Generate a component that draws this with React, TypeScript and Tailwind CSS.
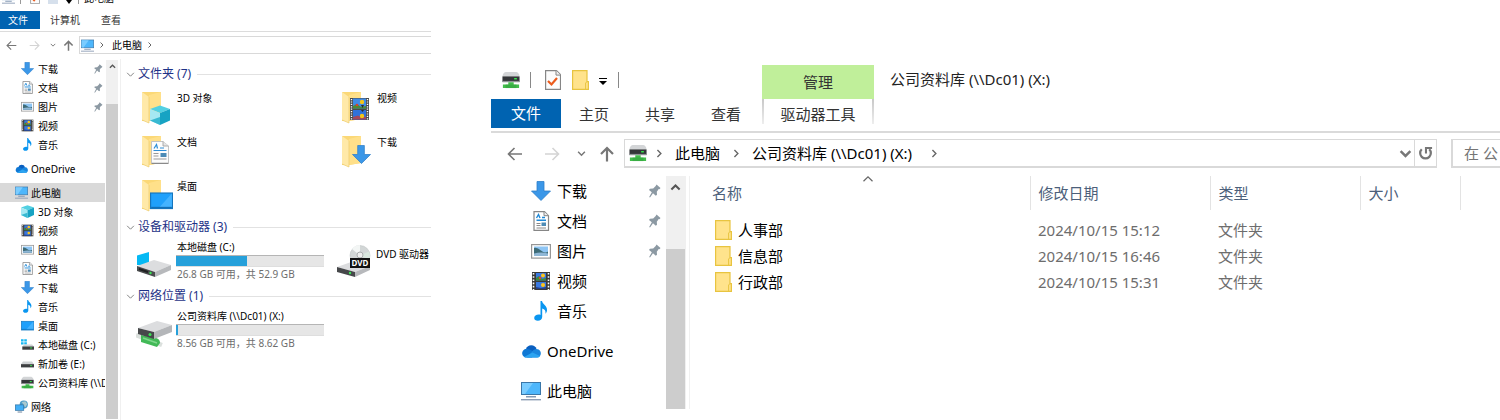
import React from 'react';

type IconProps = { className?: string };
type Icon = (p: IconProps) => React.ReactElement;

const Monitor: Icon = ({ className }) => (
  <svg viewBox="0 0 20 20" className={className} aria-hidden="true">
    <rect x="0.5" y="1.5" width="19" height="12" fill="#4db6fb" stroke="#3a76a8" />
    <path d="M1 2h11L4 13H1z" fill="#7accff" />
    <rect x="5" y="15" width="10" height="1.5" fill="#8399b3" />
    <rect x="0" y="18" width="20" height="1.4" fill="#8d9db5" />
  </svg>
);

const DownArrow: Icon = ({ className }) => (
  <svg viewBox="0 0 20 20" className={className} aria-hidden="true">
    <path d="M6 .5h7v9.500h6.500L10 19.500.5 10H6z" fill="#3b97e8" stroke="#2f7fc9" strokeWidth="0.8" />
  </svg>
);

const Doc: Icon = ({ className }) => (
  <svg viewBox="0 0 20 20" className={className} aria-hidden="true">
    <path d="M3 .7h10.500l4 4v14.600H3z" fill="#fff" stroke="#868686" strokeWidth="1.2" />
    <path d="M13 .7v4h4.500" fill="#eee" stroke="#868686" />
    <path d="M5.500 7l2-3.500 1.500 3.500M11 6.500h3M5.500 9.200h9.500" stroke="#1e88d6" strokeWidth="1.4" fill="none" />
    <path d="M5.500 12.500h4M5.500 14.500h4M5.500 17h9.500" stroke="#8a8a8a" />
    <rect x="10.500" y="11.500" width="4.500" height="3.500" fill="#4d8bb5" />
  </svg>
);

const BigDoc: Icon = ({ className }) => (
  <svg viewBox="0 0 18 23" className={className} aria-hidden="true">
    <path d="M.5.5H12L17.500 5v17H.5z" fill="#fcfcfc" stroke="#c3c3c3" />
    <path d="M12 .5V5h5.500" fill="#e6e6e6" stroke="#9a9a9a" strokeWidth="0.800" />
    <path d="M.5 22.500h17" stroke="#8a8a8a" />
    <path d="M3 7.500l2.500-4 1 4M9 7h4M2.500 9.500h13" stroke="#2c8ed8" strokeWidth="1.200" fill="none" />
    <path d="M2.500 12.500h5M2.500 15h5M2.500 18h13" stroke="#9a9a9a" />
    <rect x="9.500" y="12" width="6" height="4" fill="#4d8bb5" />
  </svg>
);

const Picture: Icon = ({ className }) => (
  <svg viewBox="0 0 20 20" className={className} aria-hidden="true">
    <rect x="0.6" y="3.600" width="18.800" height="13.500" fill="#fff" stroke="#969696" strokeWidth="1.2" />
    <rect x="3" y="5.500" width="14" height="9.500" fill="#8ec5f4" />
    <path d="M3 7q3-1 7 2.500t7 1V15H3z" fill="#3e6c78" />
    <path d="M3 12.500q7-2 14 0V15H3z" fill="#8fb7d6" />
  </svg>
);

const Film: Icon = ({ className }) => (
  <svg viewBox="0 0 20 20" className={className} aria-hidden="true">
    <rect x="1" y="1" width="18" height="18" fill="#3a3a3a" />
    <path d="M2.500 2v17M17.500 2v17" stroke="#fff" strokeWidth="1.600" strokeDasharray="1.600 1.600" />
    <rect x="5" y="2" width="10" height="7.500" fill="#3a78e0" />
    <rect x="5" y="11" width="10" height="7" fill="#3a78e0" />
    <path d="M5 9.500V7l3-2 3 3 4-1v2.500z" fill="#3f8a3a" />
    <circle cx="12" cy="4.500" r="2" fill="#ffc61a" />
    <circle cx="9" cy="7" r="1.200" fill="#e0472f" />
    <circle cx="12" cy="14" r="2" fill="#ffc61a" />
    <path d="M5 18v-2l5 1 5-1v2z" fill="#25408a" />
  </svg>
);

const BigFilm: Icon = ({ className }) => (
  <svg viewBox="0 0 19 22" className={className} aria-hidden="true">
    <rect width="19" height="22" fill="#4a4a4a" />
    <path d="M1.500 1v21M17.500 1v21" stroke="#fff" strokeWidth="1.400" strokeDasharray="1.200 1.200" />
    <rect x="3" y="0.5" width="13" height="10" fill="#3f8ae6" />
    <path d="M3 10.500V8l4-2 4 3 5-1v2.500z" fill="#4d8a34" />
    <circle cx="12" cy="4" r="2.200" fill="#f5c518" />
    <path d="M11 7h3l-1.500 3z" fill="#2c2c2c" />
    <circle cx="7" cy="7" r="1.300" fill="#d8402c" />
    <rect x="3" y="12" width="13" height="9.500" fill="#2f72da" />
    <path d="M3 21.500V19l5-1.500 4 2 4-1v3z" fill="#a3485c" />
    <circle cx="12" cy="18" r="2.200" fill="#f5c518" />
    <path d="M11 12h3l-1.500 2z" fill="#2c2c2c" />
  </svg>
);

const Note: Icon = ({ className }) => (
  <svg viewBox="0 0 20 20" className={className} aria-hidden="true">
    <path d="M9.500 0H11c.6 3.500 5.500 4.500 5 9.500-.2 1.800-1 2.700-1.600 3.300.6-3-.6-4.600-3.200-5.400V16c0 2.400-2 3.800-4.400 3.800-2.200 0-3.600-1-3.600-2.700 0-2 2-3.500 4.500-3.500.7 0 1.300.1 1.800.3z" fill="#0a96f0" />
  </svg>
);

const Cloud: Icon = ({ className }) => (
  <svg viewBox="0 0 20 20" className={className} aria-hidden="true">
    <path d="M5 8a5.600 5.600 0 0 1 10.500 0l-3 4-7-1z" fill="#0a5fc0" />
    <path d="M4.500 16.500A4.200 4.200 0 1 1 6.500 8c2.500.3 5 2 7.500 4l-3 4.500z" fill="#0f78d4" />
    <path d="M11 10.500c2-3 6.500-3.500 8.300-.2 1.500 3-.3 6.200-3.300 6.200H6z" fill="#1a86de" />
    <path d="M3 16l8.500-4.500L19 15c-.7 1-1.800 1.500-3 1.500H4.500c-.6 0-1-.2-1.500-.5z" fill="#2ba4f1" />
  </svg>
);

const Cube: Icon = ({ className }) => (
  <svg viewBox="0 0 20 20" className={className} aria-hidden="true">
    <path d="M0 4l10-3.500L20 4l-10 4z" fill="#52d0e2" />
    <path d="M0 4l10 4v12L0 15.500z" fill="#a5e8f2" />
    <path d="M20 4L10 8v12l10-4.500z" fill="#17a3c3" />
    <path d="M0 15.500L10 12v8z" fill="#38b9d2" />
  </svg>
);

const Desktop: Icon = ({ className }) => (
  <svg viewBox="0 0 20 20" className={className} aria-hidden="true">
    <rect x="0.5" y="3.500" width="19" height="13.500" fill="#1fa0fb" stroke="#1575bd" />
    <path d="M19 4v12H8z" fill="#44b3ff" />
    <path d="M1 16h18" stroke="#1170b8" />
  </svg>
);

const Drive: Icon = ({ className }) => (
  <svg viewBox="0 0 20 20" className={className} aria-hidden="true">
    <path d="M3 7h14l3 4H0z" fill="#cfd2d4" />
    <rect x="0" y="11" width="20" height="5" fill="#3d3f41" />
    <rect x="14" y="12.500" width="3" height="1.500" fill="#38e04e" />
  </svg>
);

const WinDrive: Icon = ({ className }) => (
  <svg viewBox="0 0 20 20" className={className} aria-hidden="true">
    <path d="M0 2h4v3.500H0zM5 2h4v3.500H5zM0 6.500h4V10H0zM5 6.500h4V10H5z" fill="#18b7f2" />
    <path d="M5 10h12l3 3H2z" fill="#cfd2d4" />
    <rect x="2" y="13" width="18" height="5" fill="#3d3f41" />
    <rect x="14" y="14.500" width="3" height="1.500" fill="#38e04e" />
  </svg>
);

const NetDrive: Icon = ({ className }) => (
  <svg viewBox="0 0 20 20" className={className} aria-hidden="true">
    <path d="M4 1h12q3 1 3.500 5H.5Q1 2 4 1z" fill="#d3d5d7" />
    <rect x="0.500" y="6" width="19" height="6" fill="#343639" />
    <path d="M.5 11h19v1.500H.5z" fill="#909497" />
    <rect x="13.500" y="7.800" width="3" height="1.600" fill="#35e84d" />
    <path d="M7 12.500h6V15h6v4H1v-4h6z" fill="#43bd4c" />
    <path d="M4 15h12v4H4z" fill="#2e9e39" opacity=".5" />
  </svg>
);

const Network: Icon = ({ className }) => (
  <svg viewBox="0 0 20 20" className={className} aria-hidden="true">
    <circle cx="13.500" cy="7" r="6.300" fill="#4b9bc9" />
    <path d="M10 3q3 2 2 5l4 3 3-5-3-4z" fill="#a8c8cf" />
    <rect x="0.5" y="7.500" width="13" height="8.500" fill="#42aef6" stroke="#2d6e9f" />
    <path d="M4 18.500h7" stroke="#6d8299" strokeWidth="1.500" />
  </svg>
);

const Pin: Icon = ({ className }) => (
  <svg viewBox="0 0 12 14" className={className} aria-hidden="true">
    <path d="M7.500.5l4 3.500-1 1.300-.8-.2-1.900 2.600.2 3-1.200 1L4 9.200 1 13.500l-.8-.4 2.600-4.900L0 6l.9-1.200 3.300-.3L6.700 2z" fill="#8c99a3" />
  </svg>
);

const Check: Icon = ({ className }) => (
  <svg viewBox="0 0 16 20" className={className} aria-hidden="true">
    <path d="M.6.6h10.900l4 4v14.800H.6z" fill="#fcfcfc" stroke="#868686" strokeWidth="1.200" />
    <path d="M11 .6v4.500h4.500" fill="#eee" stroke="#868686" />
    <path d="M3 11l3.500 3.500L12 8" fill="none" stroke="#eb5b1c" strokeWidth="2.200" />
  </svg>
);

const SmallFolder: Icon = ({ className }) => (
  <svg viewBox="0 0 17 20" className={className} aria-hidden="true">
    <path d="M.6.600h14.400v11h1.400v7.800H.6z" fill="#ffe38c" stroke="#e8c440" strokeWidth="1.200" />
    <path d="M13.600 19v-6l1.400-1.400" fill="none" stroke="#e8c440" />
  </svg>
);

const Folder: Icon = ({ className }) => (
  <svg viewBox="0 0 30 34" className={className} aria-hidden="true">
    <path d="M1 1h19v27l-12 2H1z" fill="#fbd877" />
    <path d="M8 4l12-3v27L8 30z" fill="#ffe08a" />
    <path d="M1 1l7 5v26l-7-3z" fill="#ffe9a8" />
    <path d="M1 29l7 3V6" fill="none" stroke="#eccb6c" strokeWidth="0.700" />
  </svg>
);

const BigC: Icon = ({ className }) => (
  <svg viewBox="0 0 36 32" className={className} aria-hidden="true">
    <path d="M1 7.500L13 4v13H1z" fill="#05b9f4" />
    <path d="M1 18l17-6 17 5-16 7z" fill="#dcdddf" />
    <path d="M19 24l16-7v5l-16 7z" fill="#b7b9bc" />
    <path d="M1 18l18 6v5L1 23z" fill="#4a4c4e" />
    <path d="M3 21l9 3" stroke="#1f2021" strokeWidth="2" />
    <circle cx="14.500" cy="25" r="1.200" fill="#3ce556" />
  </svg>
);

const BigNet: Icon = ({ className }) => (
  <svg viewBox="0 0 36 32" className={className} aria-hidden="true">
    <path d="M0 18l26 10" stroke="#dbe0dd" strokeWidth="4.500" />
    <path d="M5 18l15 3q4 1 4 5l-3 4L5 25z" fill="#42b957" />
    <path d="M7 21l14 5" stroke="#7fd88c" strokeWidth="1.500" />
    <path d="M2 11l19-7 15 4-18 7z" fill="#dcdddf" />
    <path d="M18 15l18-7v7l-18 7z" fill="#b4b6b9" />
    <path d="M2 11l16 4v7L2 17z" fill="#46484a" />
    <circle cx="14" cy="17.500" r="1.500" fill="#3ce556" />
  </svg>
);

const BigDvd: Icon = ({ className }) => (
  <svg viewBox="0 0 36 34" className={className} aria-hidden="true">
    <path d="M1 23l17-6 16 5-15 6z" fill="#dcdddf" />
    <path d="M19 28l15-6v4l-15 7z" fill="#b7b9bc" />
    <path d="M1 23l18 5v5L1 28z" fill="#46484a" />
    <circle cx="24" cy="11.500" r="10" fill="#d2d6d6" stroke="#b7bcbc" strokeWidth="0.500" />
    <path d="M24 11.500L16 5q3-4 8-4z" fill="#f3f6f5" />
    <path d="M24 11.500l9-4q2 4 0 8z" fill="#d8e6dd" />
    <circle cx="24" cy="11" r="3" fill="#eee" stroke="#a9adad" />
    <rect x="14" y="14" width="20" height="10" fill="#111" />
    <text x="24" y="22" textAnchor="middle" fontSize="8" fontWeight="bold" fontFamily="Noto Sans" fill="#fff">DVD</text>
    <circle cx="14" cy="29" r="1.200" fill="#3ce556" />
  </svg>
);

const Refresh: Icon = ({ className }) => (
  <svg viewBox="0 0 16 16" className={className} aria-hidden="true">
    <path d="M4 3.500A5.700 5.700 0 1 0 12 3.500" fill="none" stroke="currentColor" strokeWidth="2.400" />
    <path d="M8.500 8V2.200H15" fill="none" stroke="currentColor" strokeWidth="2.200" />
  </svg>
);

const Stroke = ({ d, className, width = 1.600 }: { d: string; className: string; width?: number }) => (
  <svg viewBox="0 0 16 16" className={className} fill="none" stroke="currentColor" strokeWidth={width} aria-hidden="true">
    <path d={d} />
  </svg>
);
const LEFT = 'M15 8H1.500M7.500 2L1.500 8l6 6';
const RIGHT = 'M1 8h13.500M8.500 2l6 6-6 6';
const UP = 'M8 15.500V2M2 8l6-6 6 6';
const CHEV_R = 'M5 3l5 5-5 5';
const CHEV_D = 'M2 5l6 6 6-6';
const CHEV_U = 'M2 11l6-6 6 6';

const SHARE = '公司资料库 (\\\\Dc01) (X:)';

type Item = { icon: Icon; label: string; pin?: boolean };
const quick: Item[] = [
  { icon: DownArrow, label: '下载', pin: true },
  { icon: Doc, label: '文档', pin: true },
  { icon: Picture, label: '图片', pin: true },
  { icon: Film, label: '视频' },
  { icon: Note, label: '音乐' },
];
const computer: Item[] = [
  { icon: Cube, label: '3D 对象' },
  { icon: Film, label: '视频' },
  { icon: Picture, label: '图片' },
  { icon: Doc, label: '文档' },
  { icon: DownArrow, label: '下载' },
  { icon: Note, label: '音乐' },
  { icon: Desktop, label: '桌面' },
  { icon: WinDrive, label: '本地磁盘 (C:)' },
  { icon: Drive, label: '新加卷 (E:)' },
  { icon: NetDrive, label: SHARE },
];

function SmallRow({ item, top, active }: { item: Item; top?: boolean; active?: boolean }) {
  const I = item.icon;
  return (
    <a href="#" className={`flex h-[19px] items-center overflow-hidden ${top ? 'gap-[3px] pl-[15px]' : 'gap-1 pl-[21px]'} ${active ? 'bg-[#d9d9d9]' : ''}`}>
      <I className="size-[13px] shrink-0" />
      <span className="grow whitespace-nowrap">{item.label}</span>
      {item.pin && <Pin className="mr-[2px] h-[10px] w-[9px] shrink-0" />}
    </a>
  );
}

function LargeRow({ item, top }: { item: Item; top?: boolean }) {
  const I = item.icon;
  return (
    <a href="#" className={`flex h-[30px] items-center gap-1.5 pr-[5px] ${top ? 'pl-[30px]' : 'pl-[40px]'}`}>
      <I className="size-5 shrink-0" />
      <span className="grow whitespace-nowrap">{item.label}</span>
      {item.pin && <Pin className="h-[14px] w-3 shrink-0" />}
    </a>
  );
}

function Section({ title, children }: { title: string; children: React.ReactNode }) {
  return (
    <section>
      <h2 className="flex h-[18px] items-center gap-[3px] pl-[5px] text-xs text-[#1e3287]">
        <Stroke d={CHEV_D} className="size-[9px] text-[#777]" />
        <span className="whitespace-nowrap">{title}</span>
        <span className="ml-[3px] h-px grow bg-[#e2e2e2]" />
      </h2>
      {children}
    </section>
  );
}

function FolderTile({ icon: I, label, place }: { icon: Icon; label: string; place: string }) {
  return (
    <a href="#" className="flex h-[44px] items-start gap-[5px]">
      <span className="relative w-[31px]">
        <Folder className="h-[34px] w-[30px]" />
        <I className={`absolute ${place}`} />
      </span>
      <span className="whitespace-nowrap leading-[14px]">{label}</span>
    </a>
  );
}

function DriveTile({ icon: I, label, percent, detail }: { icon: Icon; label: string; percent: number; detail: string }) {
  return (
    <a href="#" className="flex items-start gap-1">
      <I className="mt-2 h-8 w-9 shrink-0" />
      <span className="flex w-[148px] flex-col">
        <span className="whitespace-nowrap pl-px leading-[14px]">{label}</span>
        <span role="meter" aria-label={label} aria-valuenow={percent} className="mt-px flex h-3 border-y border-b-[#dedede] border-t-[#b5b5b5] bg-[#e6e6e6]">
          <span className="min-w-[2px] bg-[#26a0da]" style={{ width: `${percent}%` }} />
        </span>
        <span className="whitespace-nowrap pl-px leading-[14px] text-[#6d6d6d]">{detail}</span>
      </span>
    </a>
  );
}

function ComputerWindow() {
  return (
    <section className="flex min-w-0 flex-col text-[10px] leading-3">
      <header className="flex h-[11px] items-end overflow-hidden pb-[7px] pl-0.5">
        <Monitor className="size-[13px] shrink-0" />
        <span className="ml-[5px] h-3 w-px bg-[#999]" />
        <Check className="ml-[9px] h-3 w-[10px] shrink-0" />
        <span className="ml-2 h-3 w-[10px] bg-[#d6e0ec]" />
        <span className="ml-2 size-0 border-x-[3px] border-t-[4px] border-x-transparent border-t-black" />
        <span className="ml-[6px] h-3 w-px bg-[#999]" />
        <h1 className="ml-[5px] whitespace-nowrap">此电脑</h1>
      </header>
      <nav className="flex h-[18px] items-stretch text-[#333]">
        <button className="w-10 bg-[#0063b1] pr-1 text-white">文件</button>
        <button className="ml-[10px]">计算机</button>
        <button className="ml-[21px]">查看</button>
      </nav>
      <div className="mt-[2px] h-px bg-[#dcdcdc]" />
      <div className="mt-1 flex h-[18px] items-center">
        <div className="flex w-[79px] shrink-0 items-center pl-1.5 text-[#777]">
          <button aria-label="后退"><Stroke d={LEFT} className="size-[11px]" /></button>
          <button aria-label="前进" className="ml-3 text-[#d4d4d4]"><Stroke d={RIGHT} className="size-[11px]" /></button>
          <button aria-label="历史" className="ml-[10px]"><Stroke d={CHEV_D} className="size-[6px]" width={2.500} /></button>
          <button aria-label="向上" className="ml-[7px]"><Stroke d={UP} className="size-[11px]" width={2.200} /></button>
        </div>
        <div className="flex h-[18px] grow items-center border border-r-0 border-[#d9d9d9] pl-px">
          <Monitor className="size-[13px]" />
          <Stroke d={CHEV_R} className="ml-1 size-[8px] text-[#666]" width={2} />
          <span className="ml-[6px]">此电脑</span>
          <Stroke d={CHEV_R} className="ml-1 size-[8px] text-[#666]" width={2} />
        </div>
      </div>
      <div className="flex grow pt-[5px]">
        <nav className="w-[105px] shrink-0 overflow-hidden">
          {quick.map((q) => <SmallRow key={q.label} item={q} />)}
          <div className="py-[5px]"><SmallRow item={{ icon: Cloud, label: 'OneDrive' }} top /></div>
          <SmallRow item={{ icon: Monitor, label: '此电脑' }} top active />
          {computer.map((q) => <SmallRow key={q.label} item={q} />)}
          <div className="pt-[5px]"><SmallRow item={{ icon: Network, label: '网络' }} top /></div>
        </nav>
        <div className="mb-px ml-px mt-px flex w-3 shrink-0 flex-col items-center bg-[#f0f0f0]">
          <Stroke d={CHEV_U} className="mb-[34px] mt-[3px] size-[7px] shrink-0 text-[#555]" width={3} />
          <div className="w-full grow bg-[#cdcdcd]" />
        </div>
        <main className="ml-[2px] min-w-0 grow overflow-hidden border-l border-[#f0f0f0] pt-[6px]">
          <Section title="文件夹 (7)">
            <div className="grid grid-cols-[200px_1fr] pl-5 pt-[8px]">
              <FolderTile icon={Cube} label="3D 对象" place="left-[9px] top-[14px] size-[20px]" />
              <FolderTile icon={BigFilm} label="视频" place="left-[9px] top-[7px] h-[22px] w-[19px]" />
              <FolderTile icon={BigDoc} label="文档" place="left-[10px] top-[6px] h-[23px] w-[18px]" />
              <FolderTile icon={DownArrow} label="下载" place="left-[11px] top-[10px] size-[19px]" />
              <FolderTile icon={Desktop} label="桌面" place="left-[9px] top-[10px] size-[23px]" />
            </div>
          </Section>
          <div className="-mt-[5px]">
            <Section title="设备和驱动器 (3)">
              <div className="grid grid-cols-[200px_1fr] pl-[15px] pt-1">
                <DriveTile icon={BigC} label="本地磁盘 (C:)" percent={48} detail="26.8 GB 可用，共 52.9 GB" />
                <a href="#" className="flex items-start gap-1">
                  <BigDvd className="mt-1 h-[34px] w-9 shrink-0" />
                  <span className="whitespace-nowrap pt-[7px] leading-[14px]">DVD 驱动器</span>
                </a>
              </div>
            </Section>
          </div>
          <div className="pt-1.5">
            <Section title="网络位置 (1)">
              <div className="pl-[15px] pt-1">
                <DriveTile icon={BigNet} label={SHARE} percent={1} detail="8.56 GB 可用，共 8.62 GB" />
              </div>
            </Section>
          </div>
        </main>
      </div>
    </section>
  );
}

const rows = [
  ['人事部', '2024/10/15 15:12'],
  ['信息部', '2024/10/15 16:46'],
  ['行政部', '2024/10/15 15:31'],
];

function ShareWindow() {
  return (
    <section className="flex min-w-0 flex-col pt-[65px] text-[15px] leading-5">
      <header className="flex">
        <div className="w-[271px] shrink-0">
          <div className="flex h-[34px] items-center pb-1 pl-[11px]">
            <NetDrive className="size-[18px]" />
            <span className="ml-[10px] h-4 w-px bg-[#888]" />
            <Check className="ml-[14px] h-5 w-4" />
            <SmallFolder className="ml-[11px] h-5 w-[17px]" />
            <button aria-label="自定义快速访问工具栏" className="ml-[10px] flex flex-col items-center gap-[2px] pt-[2px]">
              <span className="h-px w-2 bg-black" />
              <span className="size-0 border-x-[4px] border-t-[4px] border-x-transparent border-t-black" />
            </button>
            <span className="ml-[11px] h-4 w-px bg-[#888]" />
          </div>
          <nav className="flex h-[29px] text-[#333]">
            <button className="w-[70px] bg-[#0063b1] pb-0.5 text-white">文件</button>
            <button className="ml-[18px]">主页</button>
            <button className="ml-9">共享</button>
            <button className="ml-9">查看</button>
          </nav>
        </div>
        <div className="w-28 shrink-0 text-center text-[#333]">
          <div className="h-[34px] bg-[#c0ef9a] leading-[34px]">管理</div>
          <div className="flex h-[29px] items-stretch justify-between">
            <span className="h-[25px] w-[2px] bg-linear-to-b from-[#c8c8c8] to-[#eee]" />
            <button>驱动器工具</button>
            <span className="h-[25px] w-[2px] bg-linear-to-b from-[#c8c8c8] to-[#eee]" />
          </div>
        </div>
        <h1 className="whitespace-nowrap pl-4 pt-1 text-[#222]">{SHARE}</h1>
      </header>
      <div className="mt-[3px] h-[2px] bg-[#dadada]" />
      <div className="mt-1.5 flex items-center">
        <div className="flex w-[133px] shrink-0 items-center pl-4 text-[#777]">
          <button aria-label="后退"><Stroke d={LEFT} className="size-4" /></button>
          <button aria-label="前进" className="ml-[21px] text-[#d4d4d4]"><Stroke d={RIGHT} className="size-4" /></button>
          <button aria-label="历史" className="ml-[17px]"><Stroke d={CHEV_D} className="size-[9px]" width={2.600} /></button>
          <button aria-label="向上" className="ml-[13px]"><Stroke d={UP} className="size-4" width={2.200} /></button>
        </div>
        <div className="flex h-[29px] min-w-0 grow items-center whitespace-nowrap border border-b-2 border-[#d9d9d9] pl-1">
          <NetDrive className="size-[18px]" />
          <Stroke d={CHEV_R} className="ml-[7px] size-[11px] text-[#666]" width={2} />
          <span className="ml-[10px] pb-px">此电脑</span>
          <Stroke d={CHEV_R} className="ml-[11px] size-[11px] text-[#666]" width={2} />
          <span className="ml-[10px] pb-px">{SHARE}</span>
          <Stroke d={CHEV_R} className="ml-[17px] size-[11px] text-[#666]" width={2} />
          <button aria-label="展开" className="ml-auto pr-[2px] text-[#777]"><Stroke d={CHEV_D} className="size-[13px]" width={3} /></button>
          <button aria-label="刷新" className="flex h-full w-[22px] items-center justify-center border-l border-[#d9d9d9] text-[#777]">
            <Refresh className="size-[15px]" />
          </button>
        </div>
        <input aria-label="搜索" placeholder="在 公" className="ml-[14px] h-[29px] w-[49px] shrink-0 border-2 border-r-0 border-t border-[#d9d9d9] pl-[11px] outline-none placeholder:text-[#757575]" />
      </div>
      <div className="flex pt-2">
        <nav className="h-[233px] w-[175px] shrink-0">
          {quick.map((q) => <LargeRow key={q.label} item={q} />)}
          <div className="py-[10px]"><LargeRow item={{ icon: Cloud, label: 'OneDrive' }} top /></div>
          <LargeRow item={{ icon: Monitor, label: '此电脑' }} top />
        </nav>
        <div className="flex w-5 shrink-0 flex-col items-center bg-[#f0f0f0] pr-px">
          <Stroke d={CHEV_U} className="mb-[56px] mt-[6px] size-[11px] shrink-0 text-[#555]" width={3} />
          <div className="w-full grow bg-[#cdcdcd]" />
        </div>
        <main className="ml-[3px] min-w-0 grow border-l border-[#f0f0f0]">
          <table className="w-full table-fixed border-collapse text-left">
            <colgroup>
              <col className="w-[340px]" />
              <col className="w-[180px]" />
              <col className="w-[150px]" />
              <col className="w-[100px]" />
              <col />
            </colgroup>
            <thead className="text-[#4c607a]">
              <tr className="h-[34px]">
                <th className="relative border-r border-[#e3e3e3] p-0 pl-[22px] font-normal">
                  名称
                  <Stroke d={CHEV_U} className="absolute left-[172px] top-[-3px] size-3 text-[#666]" />
                </th>
                <th className="border-r border-[#e3e3e3] p-0 pl-2 font-normal">修改日期</th>
                <th className="border-r border-[#e3e3e3] p-0 pl-2 font-normal">类型</th>
                <th className="border-r border-[#e3e3e3] p-0 pl-2 font-normal">大小</th>
                <td />
              </tr>
            </thead>
            <tbody className="text-[#6d6d6d]">
              <tr className="h-[7px]"><td colSpan={5} /></tr>
              {rows.map(([name, date]) => (
                <tr key={name} className="h-[26px]">
                  <td className="p-0 pl-[25px]">
                    <a href="#" className="flex items-center gap-[6px] text-black">
                      <SmallFolder className="h-5 w-[17px]" />
                      {name}
                    </a>
                  </td>
                  <td className="whitespace-nowrap p-0 pl-2">{date}</td>
                  <td className="p-0 pl-2">文件夹</td>
                  <td />
                  <td />
                </tr>
              ))}
            </tbody>
          </table>
        </main>
      </div>
    </section>
  );
}

export default function App() {
  return (
    <div lang="zh-CN" className="grid min-h-screen grid-cols-[431fr_1009fr] gap-[60px] overflow-hidden bg-white font-['Noto_Sans','Noto_Sans_CJK_SC',sans-serif] text-black">
      <ComputerWindow />
      <ShareWindow />
    </div>
  );
}
